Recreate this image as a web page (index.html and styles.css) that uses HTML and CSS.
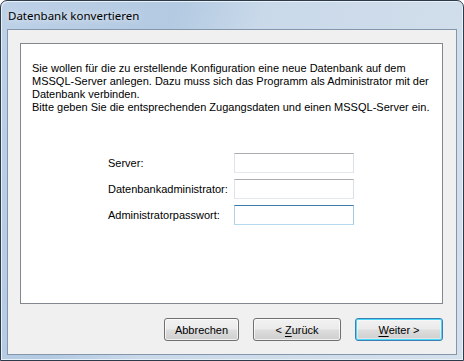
FILE: index.html
```html
<!DOCTYPE html>
<html lang="de">
  <head>
    <meta charset="UTF-8" />
    <title>Datenbank konvertieren</title>
    <link rel="stylesheet" href="styles.css">
  </head>
  <body>
    <div class="window">
      <div class="title-bar">Datenbank konvertieren</div>
      <div class="client">
        <div class="panel">
          <p class="intro">
            Sie wollen für die zu erstellende Konfiguration eine neue Datenbank auf dem<br>
            MSSQL-Server anlegen. Dazu muss sich das Programm als Administrator mit der<br>
            Datenbank verbinden.<br>
            Bitte geben Sie die entsprechenden Zugangsdaten und einen MSSQL-Server ein.
          </p>
          <div class="form-grid">
            <label for="server">Server:</label>
            <input id="server" type="text">
            <label for="admin">Datenbankadministrator:</label>
            <input id="admin" type="text">
            <label for="pass">Administratorpasswort:</label>
            <input id="pass" type="password" class="focused">
          </div>
        </div>
        <div class="button-row">
          <button class="btn btn-cancel">Abbrechen</button>
          <button class="btn"><span>&lt; <u>Z</u>urück</span></button>
          <button class="btn btn-default"><span><u>W</u>eiter &gt;</span></button>
        </div>
      </div>
    </div>
  </body>
</html>
```

FILE: styles.css
```css
body {
  margin: 0;
  padding: 0;
  font-family: "Liberation Sans", Arial, sans-serif;
  font-size: 11px;
  background: #fff;
}
.window {
  width: 464px;
  height: 361px;
  box-sizing: border-box;
  border: 1px solid #2c3a4a;
  border-radius: 7px 7px 0 0;
  padding: 0 6px 5px 6px;
  background: linear-gradient(110deg, #bdd1e7 0%, #b3cae2 30%, #c9d9ea 45%, #cfdcea 70%, #d4e0ec 100%);
  box-shadow: inset 1px 1px 0 #e8f0f8, inset -1px -1px 0 #e8f0f8;
}
.title-bar {
  height: 28px;
  line-height: 30px;
  padding-left: 1px;
  font-family: "Noto Sans", "Open Sans", sans-serif;
  font-size: 11.5px;
  color: #000;
  text-shadow: 0 0 6px rgba(255, 255, 255, 0.9);
}
.client {
  height: 326px;
  box-sizing: border-box;
  border: 1px solid #8496ab;
  background: #f0f0f0;
  padding: 13px 13px 0 12px;
}
.panel {
  height: 261px;
  box-sizing: border-box;
  background: #fff;
  border: 1px solid #828790;
  padding: 18px 11px 0 11px;
}
.intro {
  margin: 0;
  line-height: 13px;
  color: #000;
}
.form-grid {
  display: grid;
  grid-template-columns: 126px 120px;
  grid-auto-rows: 20px;
  row-gap: 6px;
  margin: 39px 0 0 76px;
  align-items: center;
}
.form-grid label {
  color: #000;
}
.form-grid input {
  height: 20px;
  box-sizing: border-box;
  border: 1px solid;
  border-color: #abadb3 #dbdfe6 #e3e9ef #e2e3ea;
  background: #fff;
  padding: 0 2px;
  margin: 0;
  font: inherit;
  outline: none;
}
.form-grid input.focused {
  border-color: #3d7bad #a4c9e3 #b7d9ed #b5cfe7;
}
.button-row {
  display: flex;
  justify-content: flex-end;
  gap: 14px;
  margin-top: 14px;
}
.btn {
  width: 88px;
  height: 23px;
  box-sizing: border-box;
  border: 1px solid #707070;
  border-radius: 3px;
  background: linear-gradient(#f2f2f2 0%, #ebebeb 48%, #dddddd 52%, #cfcfcf 100%);
  box-shadow: inset 0 0 0 1px rgba(255, 255, 255, 0.7);
  font: inherit;
  color: #000;
  padding: 0;
  cursor: pointer;
}
.btn-cancel {
  width: 75px;
}
.btn-default {
  border-color: #3c7fb1;
  box-shadow: inset 0 0 0 1px #48d8fb, inset 0 0 0 2px rgba(255, 255, 255, 0.4);
}
.btn u {
  text-decoration-thickness: 1px;
  text-underline-offset: 2px;
}
```
